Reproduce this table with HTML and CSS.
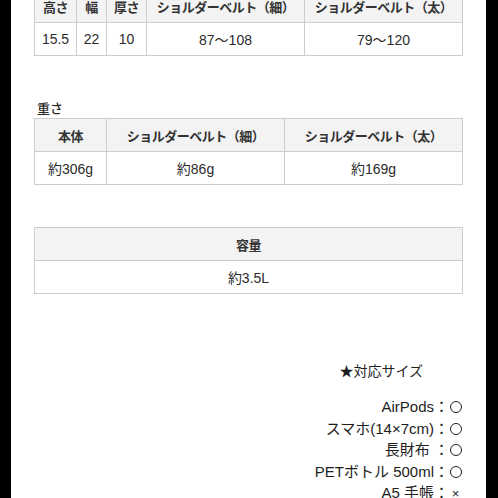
FILE: index.html
```html
<!DOCTYPE html>
<html lang="ja">
<head>
<meta charset="utf-8">
<link rel="stylesheet" href="styles.css">
</head>
<body>
<div class="page">
  <table class="spec t1">
    <colgroup><col class="c42"><col class="c30"><col class="c40"><col class="c158"><col></colgroup>
    <tr><th>高さ</th><th>幅</th><th>厚さ</th><th>ショルダーベルト（細）</th><th>ショルダーベルト（太）</th></tr>
    <tr><td>15.5</td><td>22</td><td>10</td><td>87〜108</td><td>79〜120</td></tr>
  </table>

  <div class="label">重さ</div>
  <table class="spec t2">
    <colgroup><col class="c72"><col class="c178"><col></colgroup>
    <tr><th>本体</th><th>ショルダーベルト（細）</th><th>ショルダーベルト（太）</th></tr>
    <tr><td>約306g</td><td>約86g</td><td>約169g</td></tr>
  </table>

  <table class="spec t3">
    <tr><th>容量</th></tr>
    <tr><td>約3.5L</td></tr>
  </table>

  <div class="sizes">
    <div class="sizes-title">★対応サイズ</div>
    <ul class="sizes-list">
      <li>AirPods：<span class="ok" aria-label="○"></span></li>
      <li>スマホ(14×7cm)：<span class="ok" aria-label="○"></span></li>
      <li>長財布 ：<span class="ok" aria-label="○"></span></li>
      <li>PETボトル 500ml：<span class="ok" aria-label="○"></span></li>
      <li>A5 手帳：<span class="ng">×</span></li>
    </ul>
  </div>
</div>
</body>
</html>
```

FILE: styles.css
```css
html, body {
  margin: 0;
  padding: 0;
  background: #000;
  height: 498px;
  overflow: hidden;
}
.page {
  margin-left: 11px;
  width: 475px;
  height: 520px;
  background: #fff;
  padding: 0 23px;
  box-sizing: border-box;
  font-family: "Liberation Sans", "Noto Sans CJK JP", sans-serif;
  color: #2b2b2b;
}
.spec {
  width: 429px;
  border-collapse: collapse;
  table-layout: fixed;
  font-size: 14px;
}
.spec th, .spec td {
  border: 1px solid #cdcdcd;
  height: 32px;
  padding: 0;
  text-align: center;
  vertical-align: middle;
  white-space: nowrap;
}
.spec th {
  background: #f3f3f3;
  font-family: "Noto Sans CJK JP", sans-serif;
  font-weight: 700;
  font-size: 13px;
  letter-spacing: -0.5px;
  color: #333;
}
.spec td {
  font-weight: 400;
}
.t1 { margin-top: -11px; }
.c42 { width: 42px; }
.c30 { width: 30px; }
.c40 { width: 40px; }
.c158 { width: 158px; }
.c72 { width: 72px; }
.c178 { width: 178px; }
.label {
  margin-top: 43px;
  font-family: "Noto Sans CJK JP", sans-serif;
  font-size: 13px;
  font-weight: 500;
  line-height: 18px;
  padding-left: 3px;
}
.t2 { margin-top: 1px; }
.t3 { margin-top: 42px; }
.sizes {
  margin-top: 67px;
  text-align: right;
  color: #1e1e1e;
}
.sizes-title {
  font-size: 14px;
  line-height: 20px;
  padding-right: 40px;
}
.sizes-list {
  list-style: none;
  margin: 15px 0 0;
  padding: 0 1px 0 0;
  font-size: 15px;
  line-height: 21.5px;
}
.ok {
  display: inline-block;
  width: 10px;
  height: 10px;
  border: 1.5px solid #222;
  border-radius: 50%;
  vertical-align: -1px;
  margin-left: 1px;
}
.ng {
  font-size: 13px;
  display: inline-block;
  width: 13px;
  text-align: center;
}
```
